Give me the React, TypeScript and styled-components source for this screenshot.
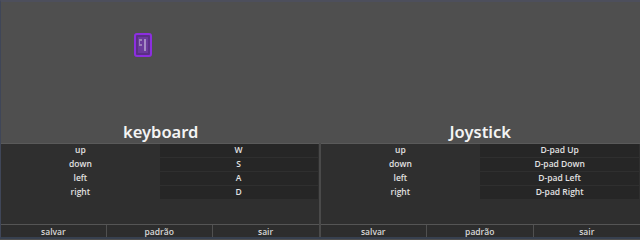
import React from "react";
import styled, { createGlobalStyle } from "styled-components";

const GlobalStyle = createGlobalStyle`
  html, body {
    margin: 0;
    padding: 0;
    background: #4f4f4f;
    font-family: "Open Sans", "Noto Sans", sans-serif;
  }
`

const Screen = styled.div`
  width: 640px;
  height: 239px;
  box-sizing: border-box;
  display: flex;
  flex-direction: column;
  background: #4f4f4f;
  border-top: 2px solid #4d4f5c;
  border-left: 1px solid #3f4658;
  border-bottom: 2px solid #37404f;
  overflow: hidden;
`

const Stage = styled.div`
  flex: 1;
  padding: 31px 0 0 133px;
`

const Sprite = styled.svg`
  display: block;
`

const Panels = styled.div`
  display: grid;
  grid-template-columns: 1fr 1fr;
`

const Panel = styled.section`
  display: flex;
  flex-direction: column;
`

const Title = styled.h2`
  margin: 0;
  height: 22px;
  line-height: 22px;
  text-align: center;
  font-family: "Noto Sans", "Open Sans", sans-serif;
  font-size: 16.5px;
  font-weight: 600;
  color: #f4f4f4;
`

const Body = styled.div<{ $divider?: boolean }>`
  display: flex;
  flex-direction: column;
  border-right: ${p => (p.$divider ? "2px solid #4a4a4a" : "none")};
`

const Table = styled.div`
  background: #2f2f2f;
  border-top: 1px solid #5a5a5a;
  height: 81px;
  box-sizing: border-box;
  display: flex;
  flex-direction: column;
  gap: 1px;
`

const Row = styled.div`
  display: grid;
  grid-template-columns: 1fr 1fr;
  height: 13px;
  font-size: 8.5px;
  line-height: 12px;
  font-weight: 600;
  color: #e2e2e2;
  text-align: center;
`

const Label = styled.div``

const Value = styled.div`
  background: #262626;
  margin-right: 1px;
`

const Footer = styled.div`
  display: grid;
  grid-template-columns: repeat(3, 1fr);
  border-top: 1px solid #555;
  background: #2d2d2d;
  height: 12px;
`

const FooterButton = styled.button<{ $last?: boolean }>`
  all: unset;
  text-align: center;
  font-family: "Open Sans", "Noto Sans", sans-serif;
  font-size: 8.5px;
  font-weight: 600;
  line-height: 13px;
  color: #d8d8d8;
  border-right: ${p => (p.$last ? "none" : "1px solid #505050")};
`

interface IBinding {
  action: string;
  key: string;
}

interface IPanelProps {
  title: string;
  bindings: IBinding[];
  divider?: boolean;
}

const actions = ["up", "down", "left", "right"];

const ControlPanel = ({ title, bindings, divider }: IPanelProps) => (
  <Panel>
    <Title>{title}</Title>
    <Body $divider={divider}>
      <Table>
        {bindings.map(b => (
          <Row key={b.action}>
            <Label>{b.action}</Label>
            <Value>{b.key}</Value>
          </Row>
        ))}
      </Table>
      <Footer>
        <FooterButton>salvar</FooterButton>
        <FooterButton>padrão</FooterButton>
        <FooterButton $last>sair</FooterButton>
      </Footer>
    </Body>
  </Panel>
);

const App = () => {
  const keyboard = ["W", "S", "A", "D"].map((key, i) => ({ action: actions[i], key }));
  const joystick = ["D-pad Up", "D-pad Down", "D-pad Left", "D-pad Right"].map((key, i) => ({
    action: actions[i],
    key,
  }));

  return (
    <>
      <GlobalStyle />
      <Screen>
        <Stage>
          <Sprite width="18" height="24" viewBox="0 0 18 24">
            <rect x="1" y="1" width="16" height="22" rx="2" fill="#5a2f86" stroke="#8c2ee0" strokeWidth="2" />
            <rect x="4" y="4" width="10" height="16" fill="#6b3a9c" />
            <path d="M5 6h3v2H6v3h2v2H5z" fill="#9a7fb8" />
            <rect x="10" y="6" width="2" height="12" fill="#a58bc4" />
          </Sprite>
        </Stage>
        <Panels>
          <ControlPanel title="keyboard" bindings={keyboard} divider />
          <ControlPanel title="Joystick" bindings={joystick} />
        </Panels>
      </Screen>
    </>
  );
};

export default App;
